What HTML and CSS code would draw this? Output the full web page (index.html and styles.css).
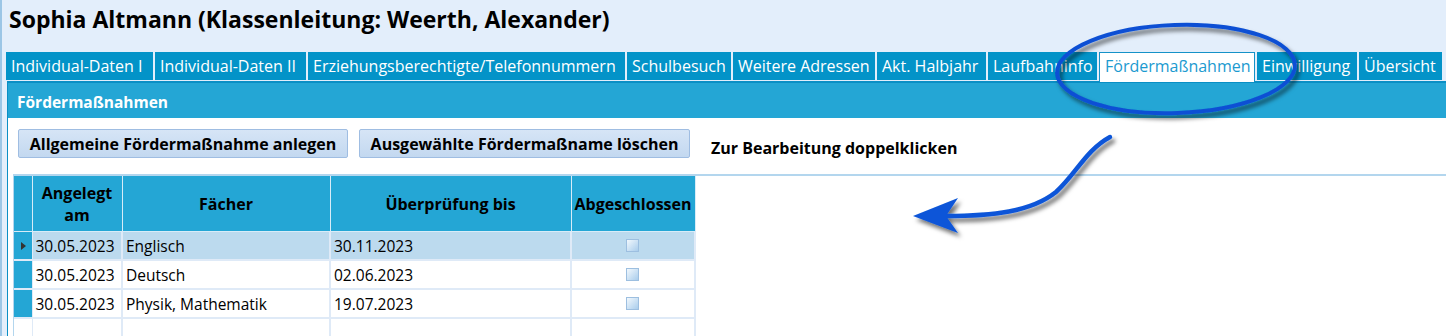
FILE: index.html
```html
<!DOCTYPE html>
<html lang="de">
<head>
    <meta charset="UTF-8" />
    <title>Fördermaßnahmen</title>
    <link rel="stylesheet" href="styles.css">
</head>
<body>
<div class="page">
    <h1 class="title">Sophia Altmann (Klassenleitung: Weerth, Alexander)</h1>

    <div class="tabs">
        <div class="tab t1">Individual-Daten I</div>
        <div class="tab t2">Individual-Daten II</div>
        <div class="tab t3">Erziehungsberechtigte/Telefonnummern</div>
        <div class="tab t4">Schulbesuch</div>
        <div class="tab t5">Weitere Adressen</div>
        <div class="tab t6">Akt. Halbjahr</div>
        <div class="tab t7">Laufbahninfo</div>
        <div class="tab t8 active">Fördermaßnahmen</div>
        <div class="tab t9">Einwilligung</div>
        <div class="tab t10">Übersicht</div>
    </div>

    <div class="panel">
        <div class="panel-head">Fördermaßnahmen</div>
        <div class="panel-body">
            <div class="toolbar">
                <button class="btn btn-add">Allgemeine Fördermaßnahme anlegen</button>
                <button class="btn btn-del">Ausgewählte Fördermaßname löschen</button>
                <span class="hint">Zur Bearbeitung doppelklicken</span>
            </div>

            <div class="grid">
                <table>
                    <colgroup>
                        <col class="c-rh">
                        <col class="c-date">
                        <col class="c-sub">
                        <col class="c-check">
                        <col class="c-done">
                    </colgroup>
                    <thead>
                    <tr>
                        <th class="rh"></th>
                        <th>Angelegt<br>am</th>
                        <th>Fächer</th>
                        <th>Überprüfung bis</th>
                        <th>Abgeschlossen</th>
                    </tr>
                    </thead>
                    <tbody>
                    <tr class="selected">
                        <td class="rh"><span class="marker"></span></td>
                        <td>30.05.2023</td>
                        <td>Englisch</td>
                        <td>30.11.2023</td>
                        <td class="center"><span class="box"></span></td>
                    </tr>
                    <tr>
                        <td class="rh"></td>
                        <td>30.05.2023</td>
                        <td>Deutsch</td>
                        <td>02.06.2023</td>
                        <td class="center"><span class="box"></span></td>
                    </tr>
                    <tr>
                        <td class="rh"></td>
                        <td>30.05.2023</td>
                        <td>Physik, Mathematik</td>
                        <td>19.07.2023</td>
                        <td class="center"><span class="box"></span></td>
                    </tr>
                    <tr class="new-row">
                        <td class="rh"></td>
                        <td></td>
                        <td></td>
                        <td></td>
                        <td></td>
                    </tr>
                    </tbody>
                </table>
            </div>
        </div>
    </div>
</div>

<!-- Markierung: Kreis um den Reiter und Pfeil zur Tabelle -->
<svg class="annot" width="1446" height="336" viewBox="0 0 1446 336">
    <defs>
        <filter id="shadow" x="-20%" y="-20%" width="140%" height="140%">
            <feDropShadow dx="3" dy="4" stdDeviation="2" flood-color="#000" flood-opacity="0.55"/>
        </filter>
    </defs>
    <g filter="url(#shadow)">
        <ellipse cx="1176" cy="69" rx="119" ry="44" transform="rotate(-2 1176 69)"
                 fill="none" stroke="#0b50d4" stroke-width="4"/>
        <path d="M1110,137 C1086,150 1076,174 1056,192 C1031,212 992,216 946,216"
              fill="none" stroke="#0b55d8" stroke-width="4.5" stroke-linecap="round"/>
        <path d="M913,216 L958,198 L946,216 L958,233 Z" fill="#0b55d8"/>
    </g>
</svg>
</body>
</html>
```

FILE: styles.css
```css
body {
    margin: 0;
    background-color: #e3eefb;
    font-family: "Open Sans", "Noto Sans", sans-serif;
    width: 1446px;
    height: 336px;
    overflow: hidden;
    position: relative;
}
.page {
    border-left: 2px solid #9cc6e6;
    height: 336px;
    box-sizing: border-box;
}
.title {
    margin: 0;
    padding: 4px 0 0 7px;
    height: 52px;
    box-sizing: border-box;
    font-size: 23px;
    line-height: 30px;
    font-weight: bold;
    color: #000;
}
.tabs {
    display: flex;
    gap: 2px;
    margin-left: 4px;
    height: 28px;
}
.tab {
    background-color: #0393c8;
    color: #fff;
    font-size: 16px;
    line-height: 28px;
    padding: 0 5px;
    white-space: nowrap;
    box-sizing: border-box;
}
.tab.active {
    background-color: #fff;
    color: #1b9ad0;
    border: 1px solid #1592c8;
    border-bottom: none;
    line-height: 27px;
    height: 30px;
    position: relative;
    z-index: 1;
}
.t1 { width: 147px; }
.t2 { width: 151px; }
.t3 { width: 317px; }
.t4 { width: 104px; }
.t5 { width: 142px; }
.t6 { width: 109px; }
.t7 { width: 109px; }
.t8 { width: 156px; }
.t9 { width: 100px; }
.t10 { width: 83px; }
.panel {
    margin-top: 1px;
    margin-left: 5px;
    border-top: 2px solid #0a8fc5;
    border-left: 1px solid #0a8fc5;
    background-color: #fff;
    height: 253px;
}
.panel-head {
    background-color: #24a6d5;
    color: #fff;
    font-size: 15.5px;
    font-weight: bold;
    height: 35px;
    box-sizing: border-box;
    padding: 3px 0 0 9px;
    line-height: 32px;
}
.toolbar {
    display: flex;
    align-items: center;
    gap: 11px;
    padding: 11px 0 0 10px;
    height: 29px;
}
.btn {
    height: 29px;
    border: 1px solid #9fbde2;
    border-radius: 2px;
    background: linear-gradient(#d6e5f6, #c3d8f0);
    font-family: inherit;
    font-size: 16px;
    font-weight: bold;
    color: #000;
    padding: 0;
}
.btn-add { width: 330px; }
.btn-del { width: 331px; }
.hint {
    margin-left: 10px;
    margin-top: 9px;
    font-size: 16px;
    font-weight: bold;
}
.grid {
    margin: 16px 0 0 5px;
    border-top: 2px solid #b3d6ee;
    border-left: 1px solid #b3d6ee;
}
table {
    border-collapse: collapse;
    table-layout: fixed;
    width: 682px;
}
.c-rh { width: 18px; }
.c-date { width: 90px; }
.c-sub { width: 208px; }
.c-check { width: 241px; }
.c-done { width: 124px; }
th {
    background-color: #24a6d5;
    color: #000;
    font-size: 16px;
    font-weight: bold;
    height: 55px;
    line-height: 22px;
    padding: 0;
    border-right: 1px solid #d8ecf8;
    border-bottom: 1px solid #d8ecf8;
}
td {
    height: 27px;
    padding: 0 0 0 3px;
    font-size: 15.5px;
    color: #000;
    border-right: 2px solid #dfeaf7;
    border-bottom: 2px solid #dfeaf7;
    white-space: nowrap;
    overflow: hidden;
}
td.rh {
    background-color: #24a6d5;
    border-right: 1px solid #dfeaf7;
    padding: 0;
}
.new-row td.rh {
    background-color: #fff;
}
.selected td {
    background-color: #bcdaee;
}
.selected td.rh {
    background-color: #24a6d5;
}
.marker {
    display: block;
    width: 0;
    height: 0;
    margin-left: 7px;
    border-top: 4px solid transparent;
    border-bottom: 4px solid transparent;
    border-left: 5px solid #333;
}
.center {
    text-align: center;
}
.box {
    display: inline-block;
    width: 11px;
    height: 11px;
    border: 1px solid #9dbfe0;
    background: linear-gradient(135deg, #f2f8fd, #a9cdec);
    vertical-align: middle;
    margin: -3px 0 0 -5px;
}
.annot {
    position: absolute;
    top: 0;
    left: 0;
    pointer-events: none;
}
```
